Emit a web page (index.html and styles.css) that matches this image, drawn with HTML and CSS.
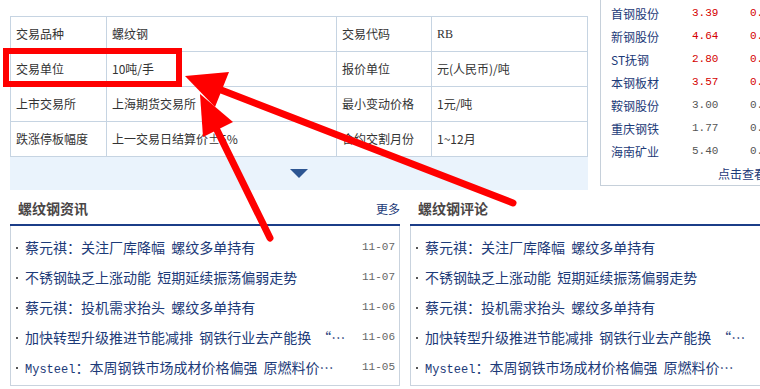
FILE: index.html
```html
<!DOCTYPE html>
<html lang="zh-CN">
<head>
<meta charset="utf-8">
<title>螺纹钢</title>
<link rel="stylesheet" href="styles.css">
</head>
<body>
<div class="page">
  <div class="top">
    <div class="info">
      <div class="spec">
        <div class="c">交易品种</div><div class="c">螺纹钢</div><div class="c">交易代码</div><div class="c latin">RB</div>
        <div class="c">交易单位</div><div class="c">10吨/手</div><div class="c">报价单位</div><div class="c">元(人民币)/吨</div>
        <div class="c">上市交易所</div><div class="c">上海期货交易所</div><div class="c">最小变动价格</div><div class="c">1元/吨</div>
        <div class="c">跌涨停板幅度</div><div class="c">上一交易日结算价±5%</div><div class="c">合约交割月份</div><div class="c">1~12月</div>
      </div>
      <div class="band"><span class="tri"></span></div>
    </div>
    <div class="stocks">
      <div class="srow"><span class="sn">首钢股份</span><span class="num up">3.39</span><span class="num up">0.89%</span></div>
      <div class="srow"><span class="sn">新钢股份</span><span class="num up">4.64</span><span class="num up">0.43%</span></div>
      <div class="srow"><span class="sn">ST抚钢</span><span class="num up">2.80</span><span class="num up">0.36%</span></div>
      <div class="srow"><span class="sn">本钢板材</span><span class="num up">3.57</span><span class="num up">0.28%</span></div>
      <div class="srow"><span class="sn">鞍钢股份</span><span class="num">3.00</span><span class="num">0.00%</span></div>
      <div class="srow"><span class="sn">重庆钢铁</span><span class="num">1.77</span><span class="num">0.00%</span></div>
      <div class="srow"><span class="sn">海南矿业</span><span class="num">5.40</span><span class="num">0.00%</span></div>
      <div class="smore">点击查看更多</div>
    </div>
  </div>
  <div class="news-row">
    <section class="news">
      <div class="nhead"><h3>螺纹钢资讯</h3><a class="more">更多</a></div>
      <ul class="nlist">
        <li><span class="dot"></span><a class="t">蔡元祺：关注厂库降幅 螺纹多单持有</a><span class="date">11-07</span></li>
        <li><span class="dot"></span><a class="t">不锈钢缺乏上涨动能 短期延续振荡偏弱走势</a><span class="date">11-07</span></li>
        <li><span class="dot"></span><a class="t">蔡元祺：投机需求抬头 螺纹多单持有</a><span class="date">11-06</span></li>
        <li><span class="dot"></span><a class="t">加快转型升级推进节能减排 钢铁行业去产能换 “…</a><span class="date">11-06</span></li>
        <li><span class="dot"></span><a class="t"><span class="en">Mysteel</span>：本周钢铁市场成材价格偏强 原燃料价…</a><span class="date">11-05</span></li>
      </ul>
    </section>
    <section class="news">
      <div class="nhead"><h3>螺纹钢评论</h3></div>
      <ul class="nlist">
        <li><span class="dot"></span><a class="t">蔡元祺：关注厂库降幅 螺纹多单持有</a><span class="date">11-07</span></li>
        <li><span class="dot"></span><a class="t">不锈钢缺乏上涨动能 短期延续振荡偏弱走势</a><span class="date">11-07</span></li>
        <li><span class="dot"></span><a class="t">蔡元祺：投机需求抬头 螺纹多单持有</a><span class="date">11-06</span></li>
        <li><span class="dot"></span><a class="t">加快转型升级推进节能减排 钢铁行业去产能换 “…</a><span class="date">11-06</span></li>
        <li><span class="dot"></span><a class="t"><span class="en">Mysteel</span>：本周钢铁市场成材价格偏强 原燃料价…</a><span class="date">11-05</span></li>
      </ul>
    </section>
  </div>
  <svg class="annot" width="760" height="389" viewBox="0 0 760 389">
    <rect x="6" y="51" width="173" height="33" fill="none" stroke="#ff0000" stroke-width="6"/>
    <line x1="513" y1="203" x2="216" y2="88" stroke="#ff0000" stroke-width="7" stroke-linecap="round"/>
    <polygon points="185,76 229,72 215,107" fill="#ff0000"/>
    <line x1="270" y1="238" x2="214" y2="124" stroke="#ff0000" stroke-width="7" stroke-linecap="round"/>
    <polygon points="200,94 233,122 203,137" fill="#ff0000"/>
  </svg>
</div>
</body>
</html>
```
FILE: styles.css
```css
html {
  overflow: hidden;
  background: #fff;
}
body {
  margin: 0;
  font-family: "Noto Sans CJK SC", "Noto Sans", sans-serif;
  color: #333;
}
.page {
  position: relative;
  width: 820px;
  height: 389px;
}
.top {
  display: flex;
  align-items: flex-start;
  padding-left: 10px;
}
.info {
  margin-top: 16px;
  width: 578px;
}
.spec {
  display: grid;
  grid-template-columns: 96px 230px 95px 156px;
  border-top: 1px solid #c6d4e2;
  border-left: 1px solid #c6d4e2;
}
.c {
  box-sizing: border-box;
  height: 35px;
  border-right: 1px solid #c6d4e2;
  border-bottom: 1px solid #c6d4e2;
  padding-left: 5px;
  font-size: 12px;
  line-height: 34px;
  color: #333;
  white-space: nowrap;
}
.latin {
  font-family: "Liberation Serif", serif;
}
.band {
  height: 33px;
  background: #eaf3fc;
  display: flex;
  align-items: center;
  justify-content: center;
}
.tri {
  width: 0;
  height: 0;
  border-left: 9px solid transparent;
  border-right: 9px solid transparent;
  border-top: 9px solid #2d5592;
}
.stocks {
  margin-left: 12px;
  width: 210px;
  border-left: 1px solid #c6d0da;
  border-bottom: 1px solid #c6d0da;
  padding-top: 2px;
}
.srow {
  display: grid;
  grid-template-columns: 81px 58px auto;
  padding-left: 10px;
  height: 23px;
  line-height: 23px;
  white-space: nowrap;
}
.sn {
  font-size: 12px;
  color: #1c3a78;
}
.num {
  font-family: "Liberation Mono", monospace;
  font-size: 11px;
  color: #555;
}
.num.up {
  color: #d40000;
}
.smore {
  height: 22px;
  line-height: 22px;
  padding-left: 117px;
  font-size: 12px;
  color: #1c3a78;
  white-space: nowrap;
}
.news-row {
  display: flex;
  gap: 10px;
  padding-left: 10px;
  margin-top: 2px;
}
.news {
  width: 390px;
  flex: none;
}
.nhead {
  height: 32px;
  display: flex;
  align-items: center;
  justify-content: space-between;
  padding-left: 8px;
  border-bottom: 2px solid #1b3d88;
}
.nhead h3 {
  margin: 0;
  font-size: 14px;
  font-weight: bold;
  color: #4a4646;
}
.more {
  font-size: 12px;
  color: #1c3a78;
}
.nlist {
  list-style: none;
  margin: 0;
  padding: 6px 4px 3px 5px;
  border: 1px solid #c9d3de;
  border-top: none;
}
.nlist li {
  display: flex;
  align-items: center;
  height: 30px;
  white-space: nowrap;
}
.dot {
  flex: none;
  width: 2px;
  height: 2px;
  margin: 2px 7px 0 0;
  background: #555;
}
.t {
  flex: 1;
  overflow: hidden;
  font-size: 14px;
  word-spacing: 3px;
  color: #1c3a78;
}
.en {
  font-family: "Liberation Mono", monospace;
  font-size: 12px;
}
.date {
  flex: none;
  font-family: "Liberation Mono", monospace;
  font-size: 11px;
  color: #666;
}
.annot {
  position: absolute;
  left: 0;
  top: 0;
  pointer-events: none;
}
```
